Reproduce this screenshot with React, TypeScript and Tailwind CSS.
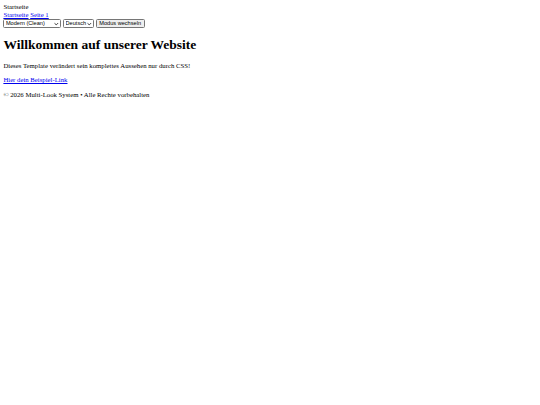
function Chevron() {
  return (
    <svg
      className="pointer-events-none absolute right-[2.5px] top-1/2 h-[3px] w-[4.5px] -translate-y-1/2"
      viewBox="0 0 10 6"
      fill="none"
      stroke="#222"
      strokeWidth="2"
    >
      <path d="M1 1l4 4 4-4" />
    </svg>
  )
}

function Select({ label, width }: { label: string; width: string }) {
  return (
    <span className={`relative inline-flex ${width}`}>
      <select className="h-[9px] w-full appearance-none rounded-[1.5px] border-[0.5px] border-[#767676] bg-white pl-[1.5px] pr-[5px] leading-none text-black outline-none">
        <option>{label}</option>
      </select>
      <Chevron />
    </span>
  )
}

export default function App() {
  return (
    <div className="min-h-[405px] bg-white p-[3.375px] font-['Liberation_Serif',serif] text-[6.75px] leading-[1.15] text-black">
      <header>
        <div>Startseite</div>
        <nav className="flex gap-[1.7px]">
          <a href="#" className="text-[#0000ee] underline">
            Startseite
          </a>
          <a href="#" className="text-[#0000ee] underline">
            Seite 1
          </a>
        </nav>
        <div className="flex items-center gap-[1.7px] pt-[0.3px] font-['Liberation_Sans',sans-serif] text-[5.625px]">
          <Select label="Modern (Clean)" width="w-[58px]" />
          <Select label="Deutsch" width="w-[31px]" />
          <button className="h-[9px] rounded-[1.5px] border-[0.5px] border-[#767676] bg-[#efefef] px-[2.5px] leading-none">
            Modus wechseln
          </button>
        </div>
      </header>
      <main>
        <h1 className="my-[9px] text-[13.5px] font-bold leading-[1.15]">Willkommen auf unserer Website</h1>
        <p className="my-[6.75px]">Dieses Template verändert sein komplettes Aussehen nur durch CSS!</p>
        <a href="#" className="text-[#0000ee] underline">
          Hier dein Beispiel-Link
        </a>
      </main>
      <footer>
        <p className="my-[6.75px]">© 2026 Multi-Look System • Alle Rechte vorbehalten</p>
      </footer>
    </div>
  )
}
